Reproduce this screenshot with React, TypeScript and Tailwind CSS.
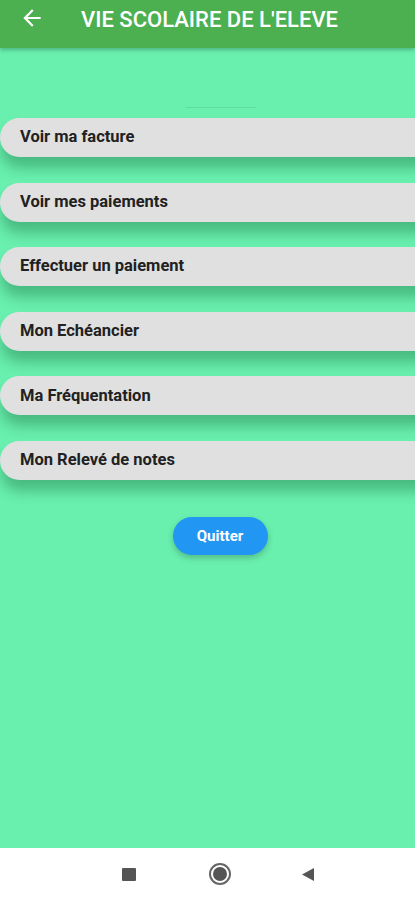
import React from "react";

const items = [
  "Voir ma facture",
  "Voir mes paiements",
  "Effectuer un paiement",
  "Mon Echéancier",
  "Ma Fréquentation",
  "Mon Relevé de notes",
];

export default function App() {
  return (
    <div
      className="w-[415px] h-[900px] flex flex-col bg-[#69f0ae] overflow-hidden"
      style={{ fontFamily: "Roboto, 'Noto Sans', sans-serif" }}
    >
      <header className="h-[48px] shrink-0 bg-[#4caf50] flex items-center shadow-[0_2px_4px_rgba(0,0,0,0.25)] relative z-10">
        <div className="w-[64px] flex justify-center">
          <svg width="26" height="26" viewBox="0 0 24 24" className="mb-[12px]">
            <path
              d="M20 11H7.83l5.59-5.59L12 4l-8 8 8 8 1.41-1.41L7.83 13H20v-2z"
              fill="#ffffff"
            />
          </svg>
        </div>
        <h1 className="ml-[17px] text-white text-[22px] font-medium leading-none mb-[9px]">
          VIE SCOLAIRE DE L'ELEVE
        </h1>
      </header>

      <main className="flex-1 flex flex-col">
        <div className="h-[60px] flex justify-center items-end pl-[26px]">
          <div className="w-[70px] h-[1px] bg-[#5fdc9e]" />
        </div>
        <div className="flex flex-col gap-[25.6px] mt-[10px]">
          {items.map((t) => (
            <div
              key={t}
              className="h-[39px] mr-[-30px] bg-[#e0e0e0] rounded-l-[20px] flex items-center pl-[20px] shadow-[0_12px_14px_-1px_rgba(0,70,35,0.32)]"
            >
              <span className="text-[16.5px] font-bold text-[#212121]">
                {t}
              </span>
            </div>
          ))}
        </div>
        <div className="flex justify-center mt-[37px] pl-[25px]">
          <button className="w-[95px] h-[38px] rounded-full bg-[#2196f3] text-white text-[15px] font-bold shadow-[0_3px_6px_rgba(0,0,0,0.22)]">
            Quitter
          </button>
        </div>
      </main>

      <nav className="h-[52px] shrink-0 bg-white flex items-center">
        <div className="flex items-center pl-[122px]">
          <div className="w-[14px] h-[13px] bg-[#555555] rounded-[1px]" />
          <div className="ml-[73px] w-[22px] h-[22px] rounded-full border-[2px] border-[#666666] flex items-center justify-center">
            <div className="w-[14px] h-[14px] rounded-full bg-[#555555]" />
          </div>
          <svg width="14" height="15" viewBox="0 0 14 15" className="ml-[70px]">
            <path d="M13 1 L1 7.5 L13 14 Z" fill="#555555" />
          </svg>
        </div>
      </nav>
    </div>
  );
}
